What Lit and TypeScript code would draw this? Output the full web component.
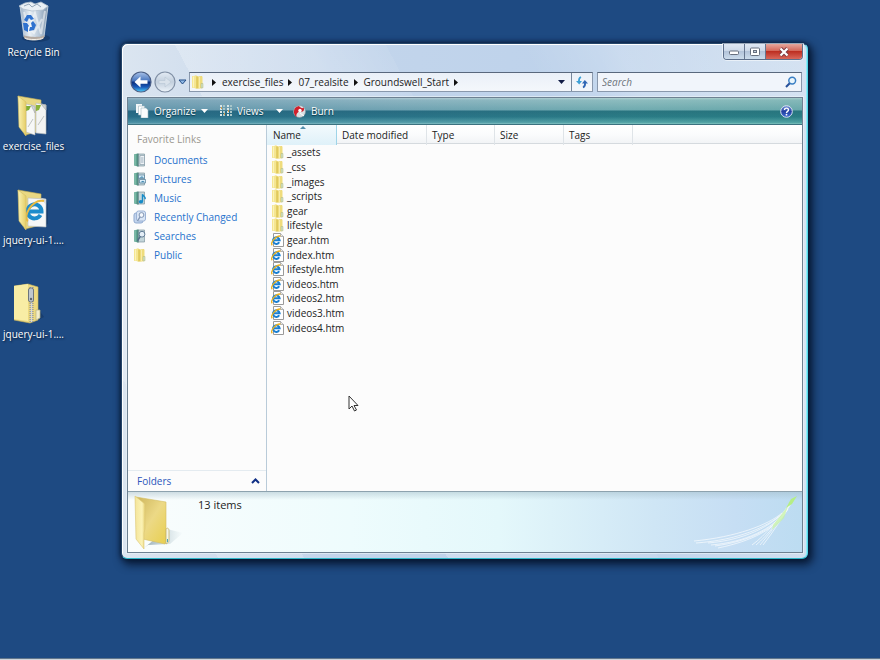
import { LitElement, html, css, svg } from "lit";
import { customElement } from "lit/decorators.js";

/* ---------- small icons, drawn on a 14 unit grid ---------- */

const folderSmall = html`<svg class="i14" viewBox="0 0 14 14" aria-hidden="true">
  <path d="M1 1.5 5 .5 7 1.5 11 1v12l-5 .6-5-1z" fill="#ecd872"/>
  <path d="M1 1.5 5.500 .6V13.500L1 12.400z" fill="#f5e692"/>
  <path d="M2.500 1.500v11" stroke="#fbf3bd" stroke-width="1"/>
  <path d="M7 2 11.500 1.400V13L7 13.400z" fill="#efdc7c"/>
  <path d="M8.500 2v11" stroke="#f8ecaa" stroke-width="1"/>
  <path d="M6 1.500v12" stroke="#d6bc4b" stroke-width="1"/>
  <path d="M10 8.500h2v4.200l-2 .4z" fill="#cfe0c4" stroke="#b3b97c" stroke-width=".5"/>
</svg>`;

const pageIe = html`<svg class="i14" viewBox="0 0 14 14" aria-hidden="true">
  <path d="M2.500.5h7l3 3v10h-10z" fill="#fff" stroke="#9a9a9a"/>
  <path d="M9.500.5v3h3" fill="#e8e8e8" stroke="#9a9a9a" stroke-width=".7"/>
  <path d="M8.200 9.300A3.300 3.300 0 1 1 8.600 7.200H2.600" fill="none" stroke="#1a7fd2" stroke-width="2"/>
  <path d="M1.200 12.200C-1 9.800 4.500 2.600 9.400 3" fill="none" stroke="#edb21f" stroke-width="1.300"/>
</svg>`;

const book = (over: unknown) => html`<svg class="i14" viewBox="0 0 14 14" aria-hidden="true">
  <path d="M1 1.200 5 .5v13L1 12.500z" fill="#5fa592"/>
  <path d="M2 1.200v11.300" stroke="#a5d4c4" stroke-width=".8"/>
  <path d="M5 1h6.500v12H5z" fill="#c3d5da" stroke="#7f979f" stroke-width=".7"/>
  <path d="M5 .6v13" stroke="#3f746b" stroke-width=".9"/>
  ${over}
</svg>`;

const docIcon = book(svg`<path d="M7 2.500h4.500v9H7z" fill="#eef3f6" stroke="#8296a3" stroke-width=".6"/><path d="M8 5h2.500M8 7h2.500M8 9h2.500" stroke="#7b94a6" stroke-width=".7"/>`);
const picIcon = book(svg`<path d="M5.500 3h6v3.500h-6zM6.500 7.500h6V11h-6z" fill="#def0fa" stroke="#527b95" stroke-width=".7"/><path d="M6 5.800 9 4.300l2 1.500zM7 10.200l3-1.400 2 1.400z" fill="#3e85ad"/>`);
const musicIcon = book(svg`<path d="M9.500 10.500V3.200c.6 2 3.200 2 2.700 5" fill="none" stroke="#168bc8" stroke-width="1.400"/><ellipse cx="7.900" cy="10.700" rx="2.200" ry="1.700" fill="#168bc8"/>`);
const searchBook = book(svg`<circle cx="9" cy="5.200" r="2.900" fill="#e4eef6" stroke="#617c95"/><path d="M7.200 7.500 4.500 11.800" stroke="#536d87" stroke-width="1.500"/>`);
const recentIcon = html`<svg class="i14" viewBox="0 0 14 14" aria-hidden="true">
  <rect x="1" y="3" width="9" height="10" rx="2" fill="#c3d5ee" stroke="#8fa9cf"/>
  <rect x="3.500" y="1" width="9" height="10" rx="2" fill="#d9e5f5" stroke="#9cb3d5"/>
  <circle cx="8.500" cy="5" r="2.400" fill="#f4f8fd" stroke="#8094b2"/>
  <path d="M7 7 4.500 11" stroke="#8094b2" stroke-width="1.400"/>
</svg>`;

/* ---------- desktop icons ---------- */

const binIcon = html`<svg width="36" height="42" viewBox="0 0 36 42" aria-hidden="true">
  <defs><linearGradient id="bin" x2="1"><stop offset="0" stop-color="#9fb2c7"/><stop offset=".35" stop-color="#e9f0f6"/><stop offset=".7" stop-color="#b5c6d7"/><stop offset="1" stop-color="#8095ab"/></linearGradient></defs>
  <ellipse cx="20" cy="37" rx="14" ry="4" fill="#12325c" opacity=".55"/>
  <path d="M4 5 8 36c1 4 18 4 20 0L32 5z" fill="url(#bin)" stroke="#d8e2ea" stroke-width=".8"/>
  <path d="M3 5 9 2l6-1 4 2 6-2 7 4-5 4-11 1L7 8z" fill="#eaf0f5" stroke="#b0bfcd" stroke-width=".8"/>
  <path d="M8 5 13 3l3 3 5-3 4 3" fill="none" stroke="#94a7b9"/>
  <path d="M8 11 13 30 19 12 25 33 29 10M10 24l8 8 8-14" fill="none" stroke="#fff" stroke-opacity=".5" stroke-width="2"/>
  <path d="m8 19 3-5 4 0 3 4-3 1-2-2-2 4zM17 20l3 4-2 5-5 1 1-4 2 0-1-4zM7 22l4 0 2 3-1 1 0 5-4-2z" fill="#2f72cf"/>
  <path d="M8 34c1 2 18 3 20.500 0L28 37c-2 3-18 3-20 0z" fill="#b4aaa2"/>
  <path d="M9 37c3 2 15 2 18 0" stroke="#f5f1ea" fill="none"/>
</svg>`;

const openFolder = (over: unknown) => html`<svg width="36" height="42" viewBox="0 0 36 42" aria-hidden="true">
  <defs><linearGradient id="fo" x2="1"><stop offset="0" stop-color="#fbf3b4"/><stop offset="1" stop-color="#e5ce69"/></linearGradient></defs>
  <path d="m24 38 8-3V12z" fill="#12325c" opacity=".5"/>
  <path d="M2 1 25 5v31L9 40z" fill="#e9d883" stroke="#c9b256" stroke-width=".6"/>
  ${over}
  <path d="M2 1 10 7v34L3 32z" fill="url(#fo)" stroke="#d3bd62" stroke-width=".6"/>
</svg>`;

const filesFolder = openFolder(svg`
  <path d="M20 8 30 10v29L20 38z" fill="#f3f4f3" stroke="#b6b9b8" stroke-width=".6"/>
  <path d="M20 10h5l-2 5-3 1z" fill="#8ab33a"/>
  <path d="m25 9 5 1v5zM22 30l6-9" fill="#cfd3d3" stroke="#a9adad" stroke-width=".7"/>
  <path d="M10 9 19 11v29L10 37z" fill="#f7f8f7" stroke="#b6b9b8" stroke-width=".6"/>
  <path d="M10 11h5l-2 4-3 1z" fill="#7fae35"/>
  <path d="m15 10 4 2v6zM12 32l5-8" fill="#d5d8d8" stroke="#a9adad" stroke-width=".7"/>`);

const ieFolder = openFolder(svg`
  <path d="m12 9 18 1v28l-18-1z" fill="#f6f7f7" stroke="#b8bcbc" stroke-width=".6"/>
  <path d="m25 9 5 1v6z" fill="#d4d8d8"/>
  <path d="M24.500 26A7 7 0 1 1 25.500 22.500H13" fill="none" stroke="#1d8ccc" stroke-width="4"/>
  <path d="M12 32C6 29 16 9 28 12" fill="none" stroke="#e9b940" stroke-width="2"/>`);

const zipFolder = html`<svg width="40" height="42" viewBox="0 0 40 42" aria-hidden="true">
  <path d="m20 39 10-5-5-7z" fill="#12325c" opacity=".5"/>
  <path d="M0 3 14 1l10 3v33l-8 3-16-3z" fill="#edda80" stroke="#cdb65d" stroke-width=".6"/>
  <path d="M0 3 14 1v37L0 36z" fill="#f8eda5"/>
  <path d="M22 27h4v8l-4 2z" fill="#f2edcb" stroke="#b9b27e" stroke-width=".7"/>
  <path d="M17.500 4v35" stroke="#8d8f90" stroke-width="4" stroke-dasharray="1 1"/>
  <path d="M17.500 4v35" stroke="#d6d9db" stroke-width="1.500"/>
  <rect x="14.500" y="5" width="5" height="14" rx="2" fill="#bfc7ce" stroke="#6c757c"/>
  <circle cx="17" cy="16" r="1.200" fill="#5d666e"/>
</svg>`;

const bigFolder = html`<svg class="big" viewBox="0 0 50 56" aria-hidden="true">
  <defs>
    <linearGradient id="bf" x2="1"><stop offset="0" stop-color="#f4e59a"/><stop offset=".7" stop-color="#fbf2b5"/><stop offset="1" stop-color="#e6d074"/></linearGradient>
    <linearGradient id="bb" x2="1" y2="1"><stop offset="0" stop-color="#cdb55b"/><stop offset=".5" stop-color="#ecd986"/><stop offset="1" stop-color="#e8cf4f"/></linearGradient>
    <linearGradient id="bs" x2="1"><stop offset="0" stop-color="#7f98a4" stop-opacity=".8"/><stop offset="1" stop-color="#9db6c0" stop-opacity="0"/></linearGradient>
  </defs>
  <path d="M33 34 49 38 36 49 14 50 10 53z" fill="url(#bs)"/>
  <path d="M2 2 32 7v40l-1 2-18-4-8-2z" fill="url(#bb)" stroke="#d4bd62" stroke-width=".6"/>
  <path d="M32 34c2-2 3 0 3 2v9c0 3-2 3-3 4z" fill="#f4f6e8" stroke="#c5b36a" stroke-width=".8"/>
  <path d="M33.500 44v3" stroke="#46a7ba"/>
  <path d="M1 1 11 9v25l-1 4v16L2 44z" fill="url(#bf)" stroke="#dcc672" stroke-width=".6"/>
</svg>`;

const crumbArrow = html`<svg class="crumb" viewBox="0 0 4 7" aria-hidden="true"><path d="M0 0 4 3.500 0 7z" fill="#111"/></svg>`;
const dropArrow = (fill: string) => html`<svg class="drop" viewBox="0 0 7 4" aria-hidden="true"><path d="M0 0h7L3.500 4z" fill=${fill}/></svg>`;

const places = [
  { name: "Documents", icon: docIcon },
  { name: "Pictures", icon: picIcon },
  { name: "Music", icon: musicIcon },
  { name: "Recently Changed", icon: recentIcon },
  { name: "Searches", icon: searchBook },
  { name: "Public", icon: folderSmall },
];

const files = [
  "_assets", "_css", "_images", "_scripts", "gear", "lifestyle",
  "gear.htm", "index.htm", "lifestyle.htm", "videos.htm",
  "videos2.htm", "videos3.htm", "videos4.htm",
];

const shortcuts = [
  { name: "Recycle Bin", icon: binIcon },
  { name: "exercise_files", icon: filesFolder },
  { name: "jquery-ui-1....", icon: ieFolder },
  { name: "jquery-ui-1....", icon: zipFolder },
];

const base = css`
  * { box-sizing: border-box; }
  svg { display: block; flex: none; }
  button, input { font: inherit; color: inherit; margin: 0; padding: 0; border: 0; background: none; }
  button { display: flex; align-items: center; }
  .i14 { width: 14px; height: 14px; }
  .drop { width: 7px; height: 4px; }
  .crumb { width: 4px; height: 7px; }
`;

@customElement("explorer-chrome")
export class ExplorerChrome extends LitElement {
  static styles = [base, css`
    :host { display: block; }
    .caption { display: flex; justify-content: flex-end; height: 28px; }
    .controls { display: flex; height: 16px; border: 1px solid #5d6f8b; border-top: 0; border-radius: 0 0 4px 4px; overflow: hidden; box-shadow: 0 0 0 1px #ffffff88; }
    .controls button { width: 21px; justify-content: center; border-right: 1px solid #66768f; background: linear-gradient(#dfe8f3, #ccd8e8 45%, #b3c4da 50%, #ccdcec); }
    .controls .close { width: 36px; border: 0; background: linear-gradient(#e6a79c, #d4685a 45%, #bd2f22 50%, #d9675a); }
    .nav { display: flex; align-items: center; height: 20px; padding: 0 1px 0 3px; }
    .travel { display: flex; align-items: center; width: 59px; }
    .address { display: flex; flex: 1; min-width: 0; height: 20px; border: 1px solid #8998ac; border-top-color: #59687d; background: linear-gradient(#eaf0f8, #f4f7fb); }
    .path { display: flex; flex: 1; align-items: center; padding: 0 6px 0 1px; color: #222; line-height: 14px; }
    .path .i14 { margin-right: 7px; }
    .path button { padding: 0 5px 0 6px; }
    .path .drop { margin-left: auto; }
    .refresh { width: 21px; justify-content: center; border-left: 1px solid #76869c; }
    .search { display: flex; flex: 0 1 205px; align-items: center; height: 20px; margin-left: 4px; padding: 0 4px; border: 1px solid #8998ac; border-top-color: #59687d; background: #f1f5fb; }
    .search input { flex: 1; min-width: 0; outline: 0; font-style: italic; }
    .search input::placeholder { color: #6f757d; opacity: 1; }
  `];
  render() {
    return html`
      <div class="caption">
        <div class="controls">
          <button aria-label="Minimize"><svg width="12" height="6" viewBox="0 0 12 6"><rect x="1.500" y="2" width="9" height="3.500" rx="1" fill="#fff" stroke="#68707f"/></svg></button>
          <button aria-label="Maximize"><svg width="12" height="10" viewBox="0 0 12 10"><rect x="1.500" y="1" width="9" height="7.500" rx="1" fill="#fff" stroke="#68707f"/><rect x="4.500" y="3.500" width="3" height="2" fill="#c1cede" stroke="#68707f"/></svg></button>
          <button class="close" aria-label="Close"><svg width="12" height="10" viewBox="0 0 12 10"><path d="m2.500 1.500 7 7m0-7-7 7" stroke="#7d3a42" stroke-width="4"/><path d="m2.500 1.500 7 7m0-7-7 7" stroke="#fff" stroke-width="2.200"/></svg></button>
        </div>
      </div>
      <div class="nav">
        <div class="travel">
          <button aria-label="Back"><svg width="22" height="22" viewBox="0 0 22 22">
            <defs><linearGradient id="bk" y2="1" x2="0"><stop offset="0" stop-color="#aac3e8"/><stop offset=".45" stop-color="#4674bd"/><stop offset=".5" stop-color="#0c2f7c"/><stop offset=".75" stop-color="#1a5ab8"/><stop offset="1" stop-color="#4fd0fa"/></linearGradient></defs>
            <circle cx="11" cy="11" r="10" fill="url(#bk)" stroke="#4b5f86" stroke-width="1.200"/>
            <path d="m4.500 11 6-5.500v3.800h7v3.400h-7v3.800z" fill="#fff"/></svg></button>
          <button aria-label="Forward"><svg width="24" height="22" viewBox="0 0 24 22">
            <defs><linearGradient id="fw" y2="1" x2="0"><stop offset="0" stop-color="#e3ebf4"/><stop offset=".5" stop-color="#c2cfdd"/><stop offset="1" stop-color="#edf4fa"/></linearGradient></defs>
            <circle cx="13" cy="11" r="10" fill="url(#fw)" stroke="#8190a5" stroke-width="1.200"/>
            <path d="m19 11-6-5v3.500H7v3h6V16z" fill="#d9e2eb" stroke="#b9c7d5" stroke-width=".6"/></svg></button>
          <button aria-label="Recent pages"><svg width="13" height="6" viewBox="0 0 13 6"><path d="M3 1h7L6.500 5z" fill="#8fb9e6" stroke="#254e87"/></svg></button>
        </div>
        <div class="address">
          <div class="path">${folderSmall}${crumbArrow}<button>exercise_files</button>${crumbArrow}<button>07_realsite</button>${crumbArrow}<button>Groundswell_Start</button>${crumbArrow}${dropArrow("#111c45")}</div>
          <button class="refresh" aria-label="Refresh"><svg width="14" height="14" viewBox="0 0 14 14"><path d="M6 2C3.500 3 3.800 5 4 7" fill="none" stroke="#3da0d6" stroke-width="1.800"/><path d="M1 6h6L4.200 9.500z" fill="#3da0d6"/><path d="M8 12.500c2.500-1 2.200-3 2-5" fill="none" stroke="#2f66b4" stroke-width="1.800"/><path d="M7 8.500h6L9.800 5z" fill="#2f66b4"/></svg></button>
        </div>
        <label class="search"><input type="search" placeholder="Search" aria-label="Search"/><svg width="12" height="12" viewBox="0 0 12 12" aria-hidden="true"><circle cx="7.200" cy="4.600" r="3.400" fill="#e9f5fc" stroke="#3a7fc4" stroke-width="1.500"/><path d="M4.700 7.200 1 11" stroke="#27519b" stroke-width="2"/></svg></label>
      </div>`;
  }
}

@customElement("explorer-toolbar")
export class ExplorerToolbar extends LitElement {
  static styles = [base, css`
    :host { display: flex; align-items: center; height: 27px; padding: 0 9px 0 7px; color: #fff; border-bottom: 1px solid #3c7280;
      background:
        linear-gradient(90deg, #1c4a8840, #1c4a8820 40%, #1f8c7420 75%, #1f8c7430),
        linear-gradient(#c4dcde, #9cc3c9 8%, #7bafb8 46%, #2a7080 50%, #2c7988 72%, #5ba7ad 94%, #93cdcd); }
    button { text-shadow: 0 1px 1px #0b3b4a; }
    .organize { width: 85px; }
    .views { width: 73px; }
    .organize svg:first-child, .views svg:first-child, .burn svg { margin-right: 5px; }
    .organize .drop { margin-left: 5px; }
    .views .drop { margin-left: 12px; }
    .help { margin-left: auto; }
  `];
  render() {
    return html`
      <button class="organize"><svg width="14" height="14" viewBox="0 0 14 14" aria-hidden="true"><path d="M1 0h6v9H1z" fill="#f3f7f9"/><path d="M3.500 2h6v9h-6z" fill="#fff" stroke="#9fb6c0" stroke-width=".6"/><path d="M6 4h5l2 2v8H6z" fill="#fafcfd" stroke="#9fb6c0" stroke-width=".6"/></svg>Organize${dropArrow("#fff")}</button>
      <button class="views"><svg width="12" height="12" viewBox="0 0 12 12" aria-hidden="true"><path d="M1 0v12M8 0v12" stroke="#d8e6e6" stroke-width="2" stroke-dasharray="2 1"/><path d="M4 0v12M11 0v12" stroke="#a8c6c9" stroke-width="2" stroke-dasharray="2 1"/><path d="M1 3h1M8 6h1M4 9h1" stroke="#d39b4a" stroke-width="2"/></svg>Views${dropArrow("#fff")}</button>
      <button class="burn"><svg width="13" height="13" viewBox="0 0 13 13" aria-hidden="true"><circle cx="6.500" cy="6.500" r="6" fill="#d9dfe2" stroke="#8b9aa2" stroke-width=".6"/><path d="M6 1C0 2-.500 9 3.500 12 3 9 4 8 6.500 6 10 8 12 5 10.500 2.500 9 4 8 3 6 1z" fill="#d0202c"/><circle cx="7" cy="5.500" r="1.700" fill="#fff"/><path d="m7 8 4 3" stroke="#fff"/></svg>Burn</button>
      <button class="help" aria-label="Help"><svg width="13" height="13" viewBox="0 0 13 13" aria-hidden="true"><defs><linearGradient id="hp" x2="0" y2="1"><stop offset="0" stop-color="#7391dc"/><stop offset=".5" stop-color="#2440a0"/><stop offset="1" stop-color="#3f6fd6"/></linearGradient></defs><circle cx="6.500" cy="6.500" r="5.800" fill="url(#hp)" stroke="#d9e2f0"/><path d="M4.500 5c0-2.600 4-2.400 4 0 0 1.400-2 1.400-2 3" fill="none" stroke="#fff" stroke-width="1.400"/><circle cx="6.500" cy="9.700" r=".9" fill="#fff"/></svg></button>`;
  }
}

@customElement("explorer-places")
export class ExplorerPlaces extends LitElement {
  static styles = [base, css`
    :host { display: flex; flex-direction: column; width: 139px; border-right: 1px solid #b9cbd9; background: #fcfcfc; }
    h2 { margin: 0; padding: 7px 9px 4px; font-size: 10px; line-height: 14px; font-weight: 400; color: #9a978f; }
    ul { list-style: none; margin: 0; padding: 0; flex: 1; }
    a { display: flex; align-items: center; gap: 7px; height: 19px; padding-left: 5px; color: #2672cc; text-decoration: none; }
    .folders { justify-content: space-between; height: 21px; padding: 0 6px 0 9px; border-top: 1px solid #e4ebf0; color: #2b56bb; }
  `];
  render() {
    return html`<h2>Favorite Links</h2>
      <ul>${places.map((p) => html`<li><a href="#">${p.icon}${p.name}</a></li>`)}</ul>
      <button class="folders">Folders<svg width="9" height="6" viewBox="0 0 9 6" aria-hidden="true"><path d="m1 5 3.500-3.500L8 5" fill="none" stroke="#0f2f85" stroke-width="2"/></svg></button>`;
  }
}

@customElement("explorer-files")
export class ExplorerFiles extends LitElement {
  static styles = [base, css`
    :host { display: block; flex: 1; min-width: 0; background: #fcfcfc; color: #222; }
    table { display: block; }
    thead, th, td { display: block; }
    th, td { padding: 0; font-weight: 400; text-align: left; }
    thead tr { display: grid; grid-template-columns: 70px 90px 68px 69px 69px 1fr; height: 19px; background: linear-gradient(#fff, #fbfcfd 50%, #f2f4f6); border-bottom: 1px solid #d5dade; }
    th { position: relative; padding-left: 5px; line-height: 20px; border-right: 1px solid #dfe4e8; }
    th:first-child { padding-left: 6px; background: linear-gradient(#f3fafd, #dff1f9); border-color: #9fd4e8; }
    th:last-child { border: 0; }
    .sort { position: absolute; top: 1px; left: 33px; }
    tbody { display: grid; grid-auto-rows: 1fr; height: 190px; margin-top: 1px; }
    tbody tr { display: flex; align-items: center; padding-left: 4px; }
    td { display: flex; align-items: center; gap: 2px; line-height: 14px; }
  `];
  render() {
    return html`<table>
      <thead><tr>
        <th scope="col">Name<svg class="sort" width="6" height="3" viewBox="0 0 6 3" aria-hidden="true"><path d="M0 3 3 0l3 3z" fill="#5590ad"/></svg></th>
        <th scope="col">Date modified</th><th scope="col">Type</th><th scope="col">Size</th><th scope="col">Tags</th><th></th>
      </tr></thead>
      <tbody>${files.map((f) => html`<tr><td>${f.endsWith(".htm") ? pageIe : folderSmall}<span>${f}</span></td></tr>`)}</tbody>
    </table>`;
  }
}

@customElement("explorer-details")
export class ExplorerDetails extends LitElement {
  static styles = [base, css`
    :host { display: flex; height: 61px; padding: 3px 0 0 6px; border-top: 1px solid #8da2ae; color: #222; font-size: 11px; line-height: 15px;
      background: linear-gradient(#9fb9c577, #ffffff00 8px), linear-gradient(90deg, #fafdfd, #eefcfd 33%, #e4f8fb 55%, #cfe6f5 78%, #c6def4 90%, #bcdcf1); }
    .big { width: 50px; height: 56px; }
    .count { flex: 1; padding: 2px 0 0 14px; }
  `];
  render() {
    return html`${bigFolder}<div class="count">13 items</div>
      <svg width="108" height="54" viewBox="0 0 108 54" aria-hidden="true">
        <g fill="none" stroke="#fff" stroke-opacity=".7" stroke-width=".9">
          <path d="M0 46C42 42 74 30 88 18"/><path d="M2 48C44 45 74 32 89 18"/><path d="M14 48C50 45 76 32 91 16"/>
          <path d="M17 50C52 47 78 34 92 16"/><path d="M21 51C56 46 80 34 93 15"/><path d="M24 53C58 46 82 34 94 14"/>
          <path d="M58 50C72 40 84 24 98 6"/><path d="M62 50C74 40 86 24 98 6"/><path d="M66 50C78 36 88 22 99 5"/><path d="M69 50C80 36 90 20 100 4"/>
        </g>
        <path d="M79 30 94 11l-4 12-12 12z" fill="#c3f2a0" opacity=".7"/>
        <path d="M92 13 97 4l6-3-5 8z" fill="#b5ee86"/>
      </svg>`;
  }
}

@customElement("app-root")
export class AppRoot extends LitElement {
  static styles = [base, css`
    :host { display: block; position: relative; min-height: 100vh; overflow: hidden; background: #1e4a82; font-family: "Open Sans", "Noto Sans", sans-serif; font-size: 10px; line-height: 14px; }
    .desktop { display: flex; flex-direction: column; width: 67px; margin: 0; padding: 1px 0 0; list-style: none; }
    .desktop li { display: flex; flex-direction: column; align-items: center; gap: 2px; height: 94px; color: #fff; white-space: nowrap; text-shadow: 1px 1px 2px #071c38; }
    .window { position: absolute; inset: 43px 72px 101px 121px; display: flex; flex-direction: column; padding: 0 4px 5px 5px; border: 1px solid #25466a; border-right-color: #56d7ea; border-bottom-color: #2fb6c8; border-radius: 6px;
      box-shadow: inset 1px 1px #fff, inset -1px 0 #8feaf6, 0 0 5px #06152d, 3px 4px 8px 2px #0a1d3a;
      background:
        linear-gradient(62deg, #ffffff00 10%, #ffffff30 10% 19%, #ffffff00 19% 34%, #ffffff38 34% 48%, #ffffff10 56%, #ffffff00 56% 70%, #ffffff30 80%, #ffffff18),
        linear-gradient(90deg, #dbe5f0, #c3d5eb 30%, #bdd2eb 70%, #d0dff0); }
    .client { flex: 1; display: flex; flex-direction: column; margin-top: 5px; border: 1px solid #6e8192; box-shadow: 0 0 0 1px #e8f1f8aa; }
    .body { flex: 1; display: flex; min-height: 0; }
    .pointer { position: absolute; left: 348px; top: 395px; }
    .taskbar { position: absolute; inset: auto 0 0; height: 2px; background: #cfd5da; border-top: 1px solid #61768c; }
  `];
  render() {
    return html`
      <ul class="desktop">${shortcuts.map((s) => html`<li>${s.icon}<span>${s.name}</span></li>`)}</ul>
      <section class="window" aria-label="Groundswell_Start">
        <explorer-chrome></explorer-chrome>
        <div class="client">
          <explorer-toolbar></explorer-toolbar>
          <div class="body"><explorer-places></explorer-places><explorer-files></explorer-files></div>
          <explorer-details></explorer-details>
        </div>
      </section>
      <svg class="pointer" width="12" height="18" viewBox="0 0 12 18" aria-hidden="true"><path d="M1 1v13l3-3 2.500 5 2-1-2.500-4.500h4z" fill="#fff" stroke="#333"/></svg>
      <div class="taskbar"></div>`;
  }
}
